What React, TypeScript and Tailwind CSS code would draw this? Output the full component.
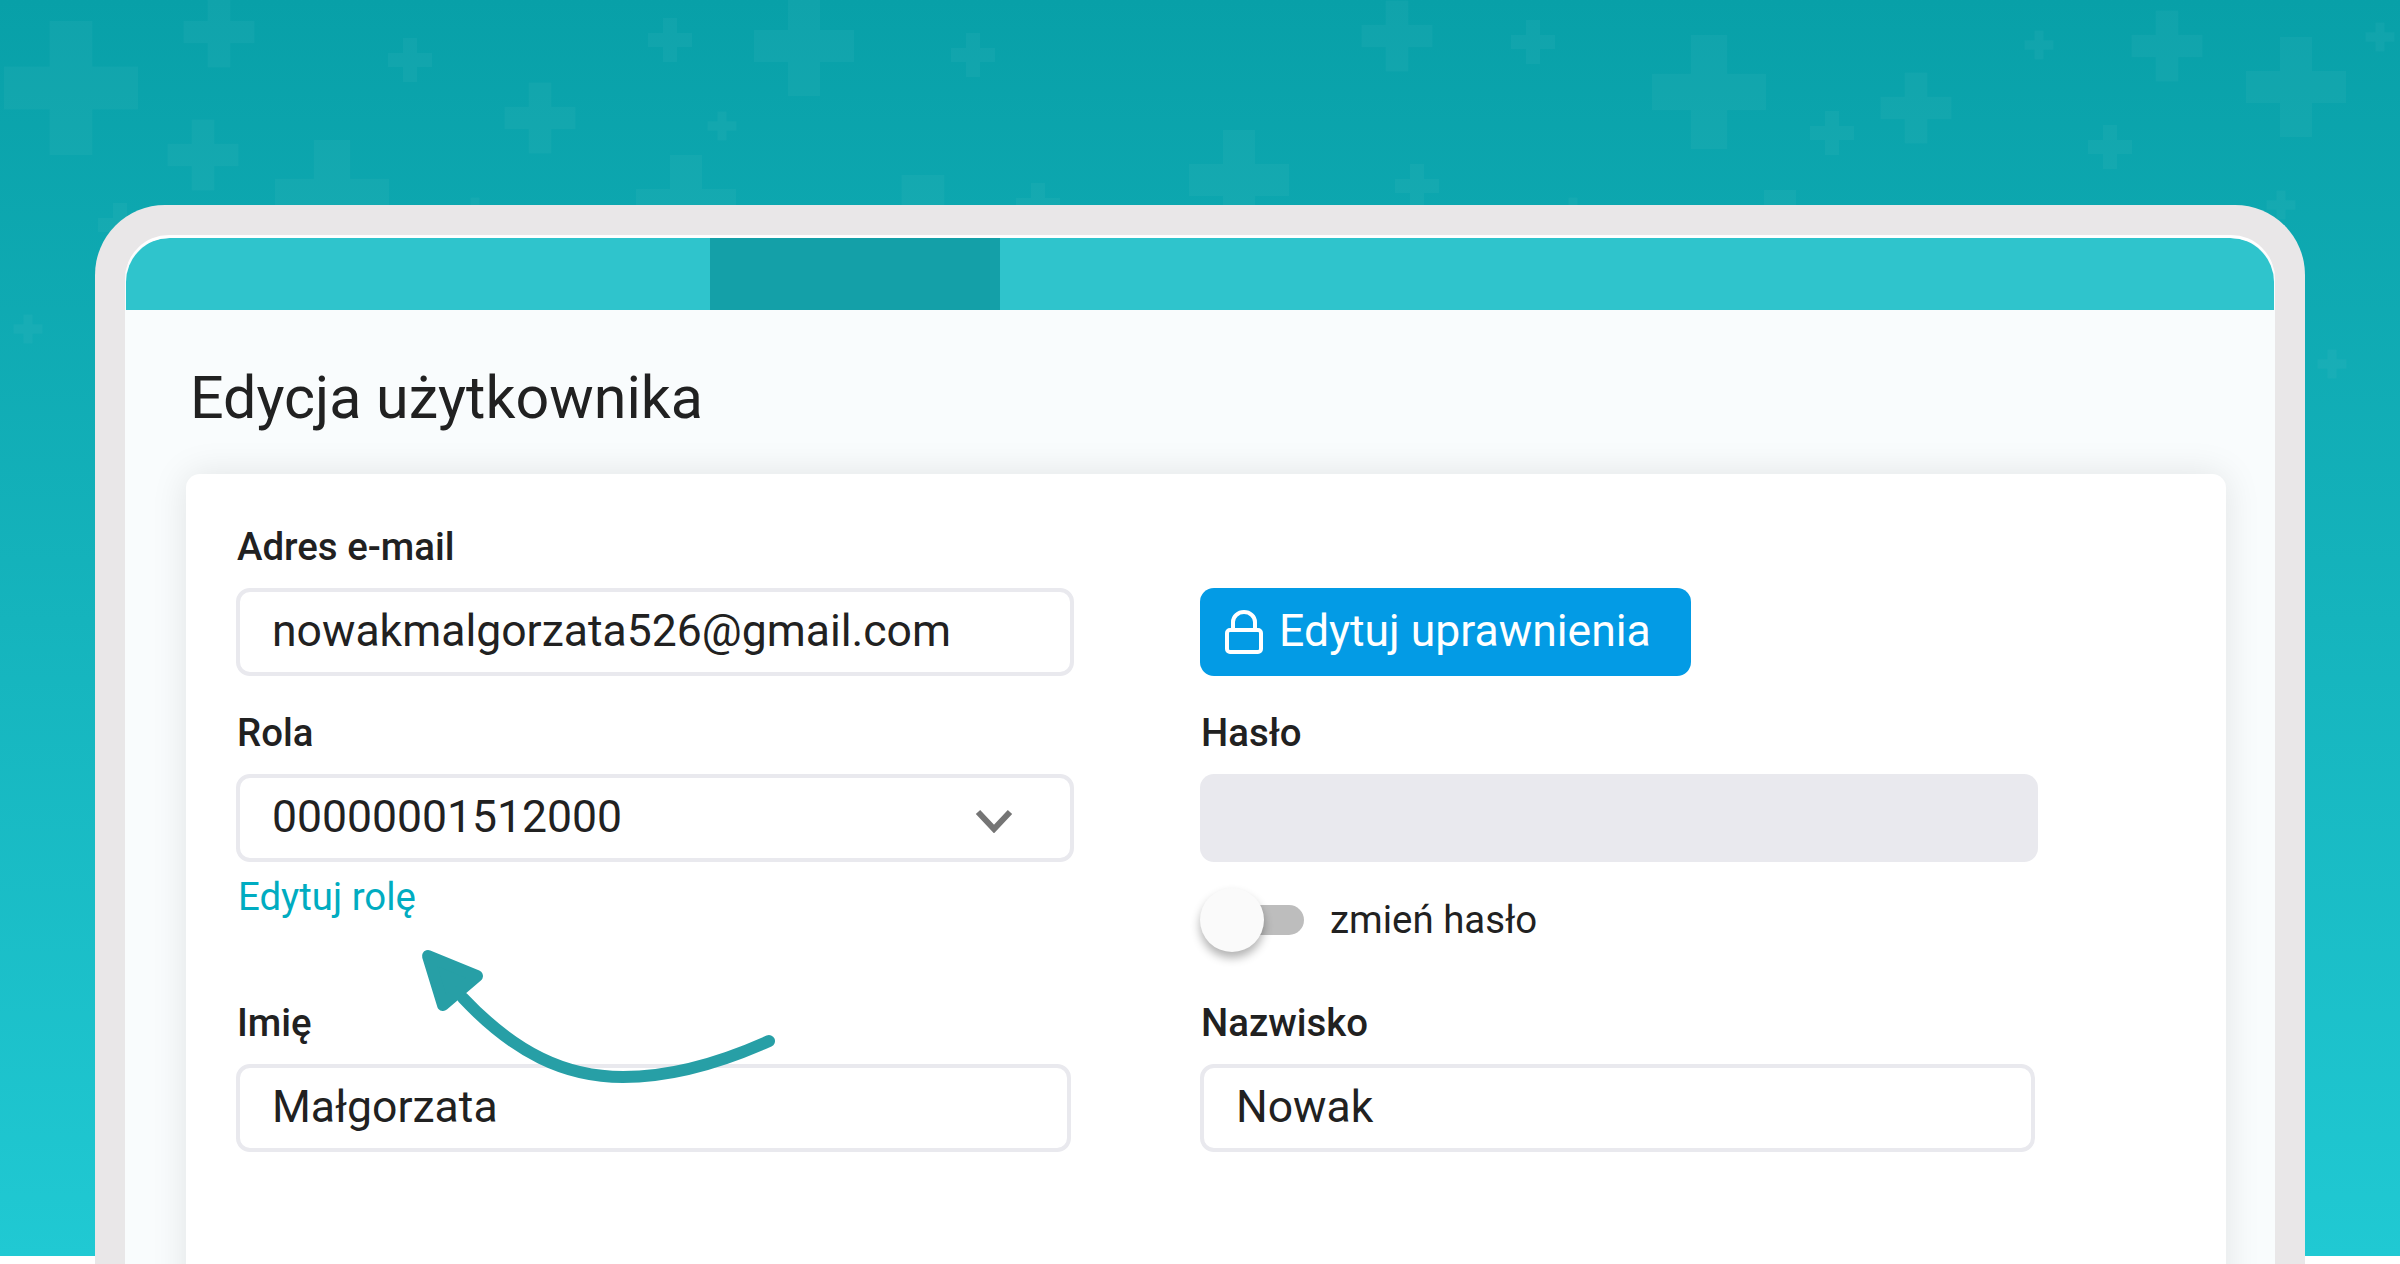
const crosses: [number, number, number][] = [
  [71, 88, 134], [219, 32, 71], [410, 60, 44], [670, 40, 44], [804, 46, 100], [973, 55, 44],
  [540, 118, 71], [722, 126, 29], [203, 155, 71], [332, 197, 114], [686, 205, 100], [923, 242, 134],
  [1038, 205, 44], [475, 212, 29], [1239, 180, 100], [1397, 36, 71], [1533, 42, 44], [1709, 92, 114],
  [1832, 133, 44], [1916, 108, 71], [2039, 45, 29], [2167, 46, 71], [2296, 87, 100], [2380, 37, 29],
  [2110, 147, 44], [1417, 186, 44], [1573, 212, 29], [1780, 240, 100], [2281, 205, 29], [2332, 364, 29],
  [28, 329, 29], [120, 225, 44],
];

function Pattern() {
  return (
    <svg className="absolute left-0 top-0" width="2400" height="420" viewBox="0 0 2400 420" fill="#ffffff" fillOpacity="0.035">
      {crosses.map(([x, y, s]) => {
        const t = s * 0.32;
        return (
          <path
            key={`${x}-${y}`}
            d={`M${x - t / 2} ${y - s / 2}h${t}v${(s - t) / 2}h${(s - t) / 2}v${t}h${-(s - t) / 2}v${(s - t) / 2}h${-t}v${-(s - t) / 2}h${-(s - t) / 2}v${-t}h${(s - t) / 2}z`}
          />
        );
      })}
    </svg>
  );
}

function Label({ children }: { children: React.ReactNode }) {
  return <div className="h-[42px] mb-[20px] text-[38.4px] leading-[42px] font-medium text-[#212121] pl-[1px]">{children}</div>;
}

function Input({ value, width = "w-[838px]", children }: { value: string; width?: string; children?: React.ReactNode }) {
  return (
    <div className={`${width} h-[88px] flex items-center justify-between rounded-[14px] border-[4px] border-[#e9e9ee] bg-white pl-[32px] pr-[56px] text-[44.5px] text-[#212121]`}>
      <span className="-mt-[2px]">{value}</span>
      {children}
    </div>
  );
}

function Chevron() {
  return (
    <svg width="38" height="24" viewBox="0 0 38 24" className="mr-[1px] mt-[6px]">
      <path d="M3 3l16 17L35 3" fill="none" stroke="#757575" strokeWidth="6" />
    </svg>
  );
}

function Lock() {
  return (
    <svg width="38" height="44" viewBox="0 0 38 44" fill="none" stroke="#ffffff" strokeWidth="4">
      <rect x="2" y="20" width="34" height="22" rx="3" />
      <path d="M8 20v-8a11 10 0 0 1 22 0v8" />
    </svg>
  );
}

function Arrow() {
  return (
    <svg className="absolute left-[415px] top-[945px]" width="365" height="145" viewBox="0 0 365 145" fill="none">
      <path d="M354 96C305 118 255 132 208 132C150 132 100 108 48 53" stroke="#279fa6" strokeWidth="12" strokeLinecap="round" />
      <path d="M13 11L62 31L28 60Z" fill="#279fa6" stroke="#279fa6" strokeWidth="12" strokeLinejoin="round" />
    </svg>
  );
}

export default function App() {
  return (
    <div className="relative h-[1264px] w-[2400px] overflow-hidden bg-white bg-gradient-to-b from-[#08a0a8] to-[#20c9d3] bg-[length:100%_1256px] bg-no-repeat pt-[205px] px-[95px] font-['Roboto',sans-serif]">
      <Pattern />
      <div className="relative h-[1100px] rounded-t-[70px] border-[30px] border-b-0 border-[#e9e7e8] bg-[#e9e7e8]">
        <div className="h-full overflow-hidden rounded-t-[44px] border-t-[3px] border-white bg-[#f9fcfd]">
          <div className="mx-[1px] flex h-[72px] overflow-hidden rounded-t-[44px]">
            <div className="w-[584px] bg-[#2fc4cc]" />
            <div className="w-[290px] bg-[#14a0a8]" />
            <div className="flex-1 bg-[#2fc4cc]" />
          </div>
          <h1 className="ml-[65px] mt-[52px] h-[72px] text-[59.2px] leading-[72px] font-normal text-[#212121]">Edycja użytkownika</h1>
          <div className="ml-[61px] mr-[49px] mt-[40px] h-[900px] rounded-[14px] bg-white pl-[50px] pt-[52px] shadow-[0_0_36px_rgba(0,0,0,0.1)]">
            <div className="grid grid-cols-[838px_838px] gap-x-[126px]">
              <div>
                <Label>Adres e-mail</Label>
                <Input value="nowakmalgorzata526@gmail.com" />
              </div>
              <div className="pt-[62px]">
                <button className="flex h-[88px] w-[491px] items-center gap-[16px] rounded-[14px] bg-[#039be5] pb-[1px] pl-[25px] text-[44.5px] text-white">
                  <Lock />
                  Edytuj uprawnienia
                </button>
              </div>
              <div className="mt-[36px]">
                <Label>Rola</Label>
                <Input value="00000001512000">
                  <Chevron />
                </Input>
                <div className="mt-[11px] pl-[2px] text-[38.4px] leading-[48px] text-[#00acc1]">Edytuj rolę</div>
              </div>
              <div className="mt-[36px]">
                <Label>Hasło</Label>
                <div className="h-[88px] rounded-[14px] bg-[#e9e9ee]" />
                <div className="mt-[26px] flex h-[64px] items-center">
                  <div className="relative h-[30px] w-[104px]">
                    <div className="absolute bottom-0 left-[32px] right-0 top-0 rounded-r-full bg-[#bdbdbd]" />
                    <div className="absolute left-0 top-[-17px] h-[64px] w-[64px] rounded-full bg-[#fafafa] shadow-[0_6px_10px_rgba(0,0,0,0.3)]" />
                  </div>
                  <span className="ml-[26px] text-[38.4px] text-[#212121]">zmień hasło</span>
                </div>
              </div>
              <div className="mt-[50px]">
                <Label>Imię</Label>
                <Input value="Małgorzata" width="w-[835px]" />
              </div>
              <div className="mt-[50px]">
                <Label>Nazwisko</Label>
                <Input value="Nowak" width="w-[835px]" />
              </div>
            </div>
          </div>
        </div>
      </div>
      <Arrow />
    </div>
  );
}
